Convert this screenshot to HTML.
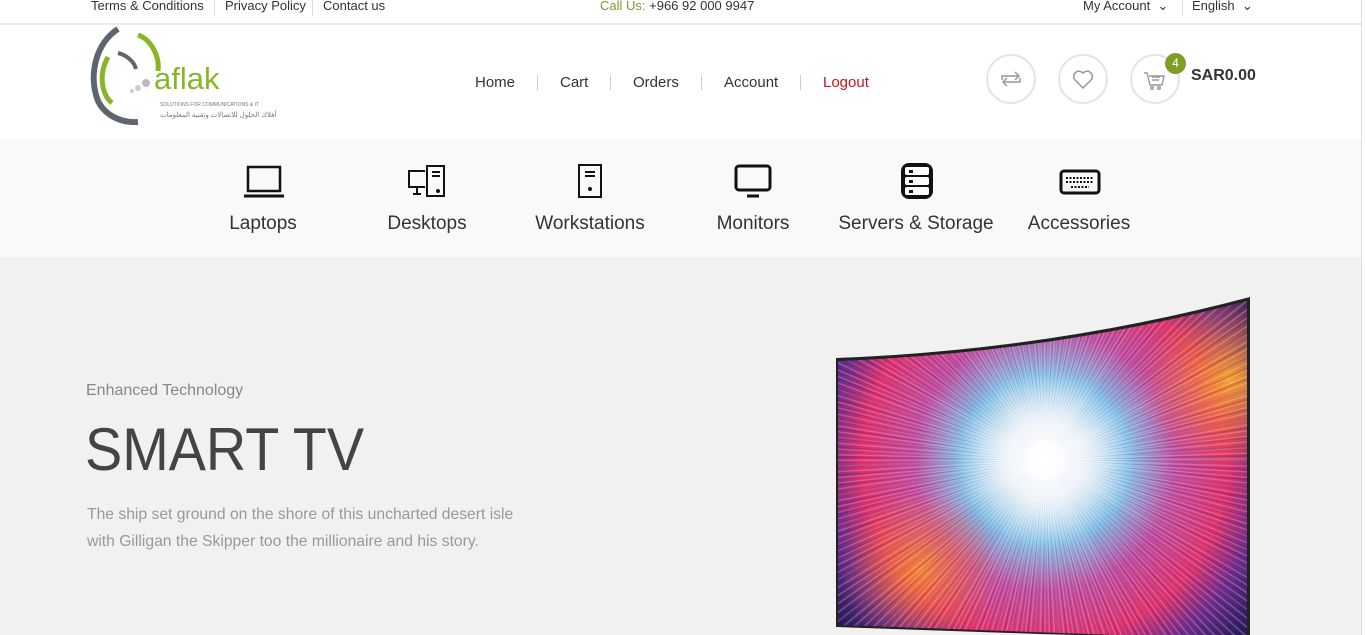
<!DOCTYPE html>
<html><head><meta charset="utf-8"><style>
*{margin:0;padding:0;box-sizing:border-box}
body{width:1366px;height:635px;overflow:hidden;background:#f1f1f1;font-family:"Liberation Sans",sans-serif;position:relative}
.top{position:absolute;left:0;top:0;width:1366px;height:25px;background:#fff;border-bottom:2px solid #ececec;font-size:13px;color:#333}
.top span{position:absolute;top:-2px}
.hdr{position:absolute;top:25px;left:0;width:1366px;height:114px;background:#fff}
.nav{position:absolute;top:74px;font-size:15px;color:#333}
.sep{position:absolute;top:75px;width:1px;height:15px;background:#ccc}
.circ{position:absolute;top:54px;width:50px;height:50px;border:2px solid #e4e4e4;border-radius:50%;background:#fff}
.cats{position:absolute;top:139px;left:0;width:1366px;height:118px;background:#f9f9f9}
.cat{position:absolute;top:74px;font-size:19px;color:#333;text-align:center;width:200px;margin-left:-100px}
.ic{position:absolute;top:24px}
.sb{position:absolute;right:0;top:0;width:5px;height:635px;background:#fff;border-left:1px solid #ddd}
</style></head><body>
<div class="top">
<span style="left:91px">Terms &amp; Conditions</span>
<div style="position:absolute;left:214px;top:0;width:1px;height:16px;background:#ddd"></div>
<span style="left:225px">Privacy Policy</span>
<div style="position:absolute;left:312px;top:0;width:1px;height:16px;background:#ddd"></div>
<span style="left:323px">Contact us</span>
<span style="left:600px"><b style="font-weight:normal;color:#7f9c25">Call Us:</b> +966 92 000 9947</span>
<span style="left:1083px">My Account &nbsp;⌄</span>
<div style="position:absolute;left:1182px;top:0;width:1px;height:16px;background:#ddd"></div>
<span style="left:1192px">English &nbsp;⌄</span>
</div>
<div class="hdr">
<svg style="position:absolute;left:88px;top:0" width="190" height="100" viewBox="0 0 190 100">
<path d="M30 4 C8 18 0 50 10 76 C18 92 35 98 50 97" fill="none" stroke="#5d6670" stroke-width="6"/>
<path d="M50 10 C62 14 72 30 70 46" fill="none" stroke="#8ab528" stroke-width="5"/>
<path d="M20 32 C10 50 14 70 24 78" fill="none" stroke="#8ab528" stroke-width="5"/>
<path d="M30 28 C38 30 46 36 48 44" fill="none" stroke="#5d6670" stroke-width="4"/>
<circle cx="58" cy="58" r="4" fill="#bbb"/><circle cx="50" cy="63" r="3" fill="#ccc"/><circle cx="44" cy="66" r="2" fill="#ccc"/>
<text x="66" y="64" font-family="Liberation Sans" font-size="31" fill="#8ab528">aflak</text>
<text x="72" y="81" font-family="Liberation Sans" font-size="5" fill="#777">SOLUTIONS FOR COMMUNICATIONS &amp; IT</text>
<text x="72" y="92" font-family="Liberation Sans, Noto Sans CJK SC, sans-serif" font-size="7" fill="#777">أفلاك الحلول للاتصالات وتقنية المعلومات</text>
</svg>
<span class="nav" style="left:475px;top:49px">Home</span><div class="sep" style="left:537px;top:50px"></div>
<span class="nav" style="left:560px;top:49px">Cart</span><div class="sep" style="left:610px;top:50px"></div>
<span class="nav" style="left:633px;top:49px">Orders</span><div class="sep" style="left:701px;top:50px"></div>
<span class="nav" style="left:724px;top:49px">Account</span><div class="sep" style="left:800px;top:50px"></div>
<span class="nav" style="left:823px;top:49px;color:#c4161c">Logout</span>
</div>
<div class="circ" style="left:986px"><svg width="46" height="46" viewBox="0 0 46 46" fill="none" stroke="#999" stroke-width="1.5"><path d="M14 24v-4h17M27 16l4 4-4 4M32 22v4H15M19 30l-4-4 4-4"/></svg></div>
<div class="circ" style="left:1058px"><svg width="46" height="46" viewBox="0 0 46 46" fill="none" stroke="#999" stroke-width="1.5"><path d="M23 32l-8-8a5 5 0 0 1 8-7a5 5 0 0 1 8 7z"/></svg></div>
<div class="circ" style="left:1130px"><svg width="46" height="46" viewBox="0 0 46 46" fill="none" stroke="#999" stroke-width="1.4"><path d="M12 17h3l3 12h12l2-9H17M20 21h8M20 24h7"/><circle cx="20" cy="32" r="1.3"/><circle cx="27" cy="32" r="1.3"/></svg></div>
<div style="position:absolute;left:1165px;top:53px;width:21px;height:21px;border-radius:50%;background:#7f9c25;color:#fff;font-size:12px;text-align:center;line-height:21px">4</div>
<div style="position:absolute;left:1191px;top:67px;font-size:16px;font-weight:bold;color:#333">SAR0.00</div>
<div class="cats">
<svg class="ic" style="left:244px" width="40" height="36" viewBox="0 0 40 36" fill="none" stroke="#111" stroke-width="2.5"><rect x="4" y="4" width="32" height="24"/><path d="M0 33h40" stroke-width="3"/></svg>
<svg class="ic" style="left:407px" width="40" height="36" viewBox="0 0 40 36" fill="none" stroke="#111" stroke-width="2"><path d="M18 8H2v16h16M10 24v6M6 31h8"/><rect x="20" y="3" width="17" height="30"/><path d="M25 9h8M25 13h8"/><circle cx="31" cy="28" r="1" fill="#111"/></svg>
<svg class="ic" style="left:577px" width="26" height="36" viewBox="0 0 26 36" fill="none" stroke="#111" stroke-width="2"><rect x="2" y="2" width="22" height="32"/><path d="M8 9h10M8 13h10"/><circle cx="13" cy="26" r="1" fill="#111"/></svg>
<svg class="ic" style="left:733px" width="40" height="36" viewBox="0 0 40 36" fill="none" stroke="#111" stroke-width="3"><rect x="3" y="3" width="34" height="24" rx="3"/><path d="M14 33h12"/></svg>
<svg class="ic" style="left:897px" width="40" height="36" viewBox="0 0 40 36"><rect x="4" y="0" width="32" height="36" rx="8" fill="#111"/><g fill="#fff"><rect x="8" y="4" width="24" height="8" rx="2"/><rect x="8" y="14" width="24" height="8" rx="2"/><rect x="8" y="24" width="24" height="8" rx="2"/></g><g fill="#111"><rect x="12" y="7" width="4" height="3"/><rect x="12" y="17" width="4" height="3"/><rect x="12" y="27" width="4" height="3"/></g></svg>
<svg class="ic" style="left:1059px;top:30px" width="42" height="26" viewBox="0 0 42 26" fill="none" stroke="#111" stroke-width="3"><rect x="2" y="2" width="38" height="22" rx="3"/><path d="M7 9h28M7 13h28M12 18h18" stroke-width="2" stroke-dasharray="2 1.5"/></svg>
<div class="cat" style="left:263px">Laptops</div>
<div class="cat" style="left:427px">Desktops</div>
<div class="cat" style="left:590px">Workstations</div>
<div class="cat" style="left:753px">Monitors</div>
<div class="cat" style="left:916px">Servers &amp; Storage</div>
<div class="cat" style="left:1079px">Accessories</div>
</div>
<div style="position:absolute;left:86px;top:382px;font-size:16px;color:#888">Enhanced Technology</div>
<div style="position:absolute;left:85px;top:415px;font-size:60px;color:#444;transform:scaleX(0.93);transform-origin:left">SMART TV</div>
<div style="position:absolute;left:87px;top:501px;font-size:16px;color:#999;line-height:27px;transform:scaleX(0.98);transform-origin:left">The ship set ground on the shore of this uncharted desert isle<br>with Gilligan the Skipper too the millionaire and his story.</div>
<svg style="position:absolute;left:0;top:0" width="1366" height="635">
<defs>
<radialGradient id="g" cx="1045" cy="460" r="260" gradientUnits="userSpaceOnUse">
<stop offset="0" stop-color="#ffffff"/><stop offset="0.15" stop-color="#e8f4fb"/><stop offset="0.32" stop-color="#7cc0e8"/><stop offset="0.5" stop-color="#c04a9e"/><stop offset="0.7" stop-color="#e0306a"/><stop offset="0.85" stop-color="#6a2a8a"/><stop offset="1" stop-color="#2a1a5a"/></radialGradient>
<radialGradient id="o" cx="1230" cy="380" r="90" gradientUnits="userSpaceOnUse"><stop offset="0" stop-color="#ffb020" stop-opacity=".9"/><stop offset="1" stop-color="#ff6020" stop-opacity="0"/></radialGradient>
<radialGradient id="o2" cx="920" cy="570" r="80" gradientUnits="userSpaceOnUse"><stop offset="0" stop-color="#ff9a20" stop-opacity=".8"/><stop offset="1" stop-color="#ff6020" stop-opacity="0"/></radialGradient>
<radialGradient id="w" cx="1045" cy="460" r="90" gradientUnits="userSpaceOnUse"><stop offset="0" stop-color="#fff" stop-opacity=".8"/><stop offset="1" stop-color="#fff" stop-opacity="0"/></radialGradient>
<clipPath id="c"><path d="M838 361 Q1050 353 1247 301 L1247 640 Q1040 632 838 625 Z"/></clipPath>
</defs>
<path d="M836 358 Q1050 350 1250 297 L1250 640 L1040 634 L836 627 Z" fill="#222"/>
<g clip-path="url(#c)">
<rect x="830" y="290" width="430" height="350" fill="url(#g)"/>
<rect x="830" y="290" width="430" height="350" fill="url(#o)"/>
<rect x="830" y="290" width="430" height="350" fill="url(#o2)"/>
<circle cx="1045" cy="460" r="200" fill="none" stroke="#fff" stroke-opacity=".22" stroke-width="360" stroke-dasharray="1.5 4"/>
<circle cx="1045" cy="460" r="200" fill="none" stroke="#3a1a6a" stroke-opacity=".2" stroke-width="360" stroke-dasharray="2 7"/>
<rect x="830" y="290" width="430" height="350" fill="url(#w)"/>
</g>
</svg>
<div class="sb"></div>
</body></html>
